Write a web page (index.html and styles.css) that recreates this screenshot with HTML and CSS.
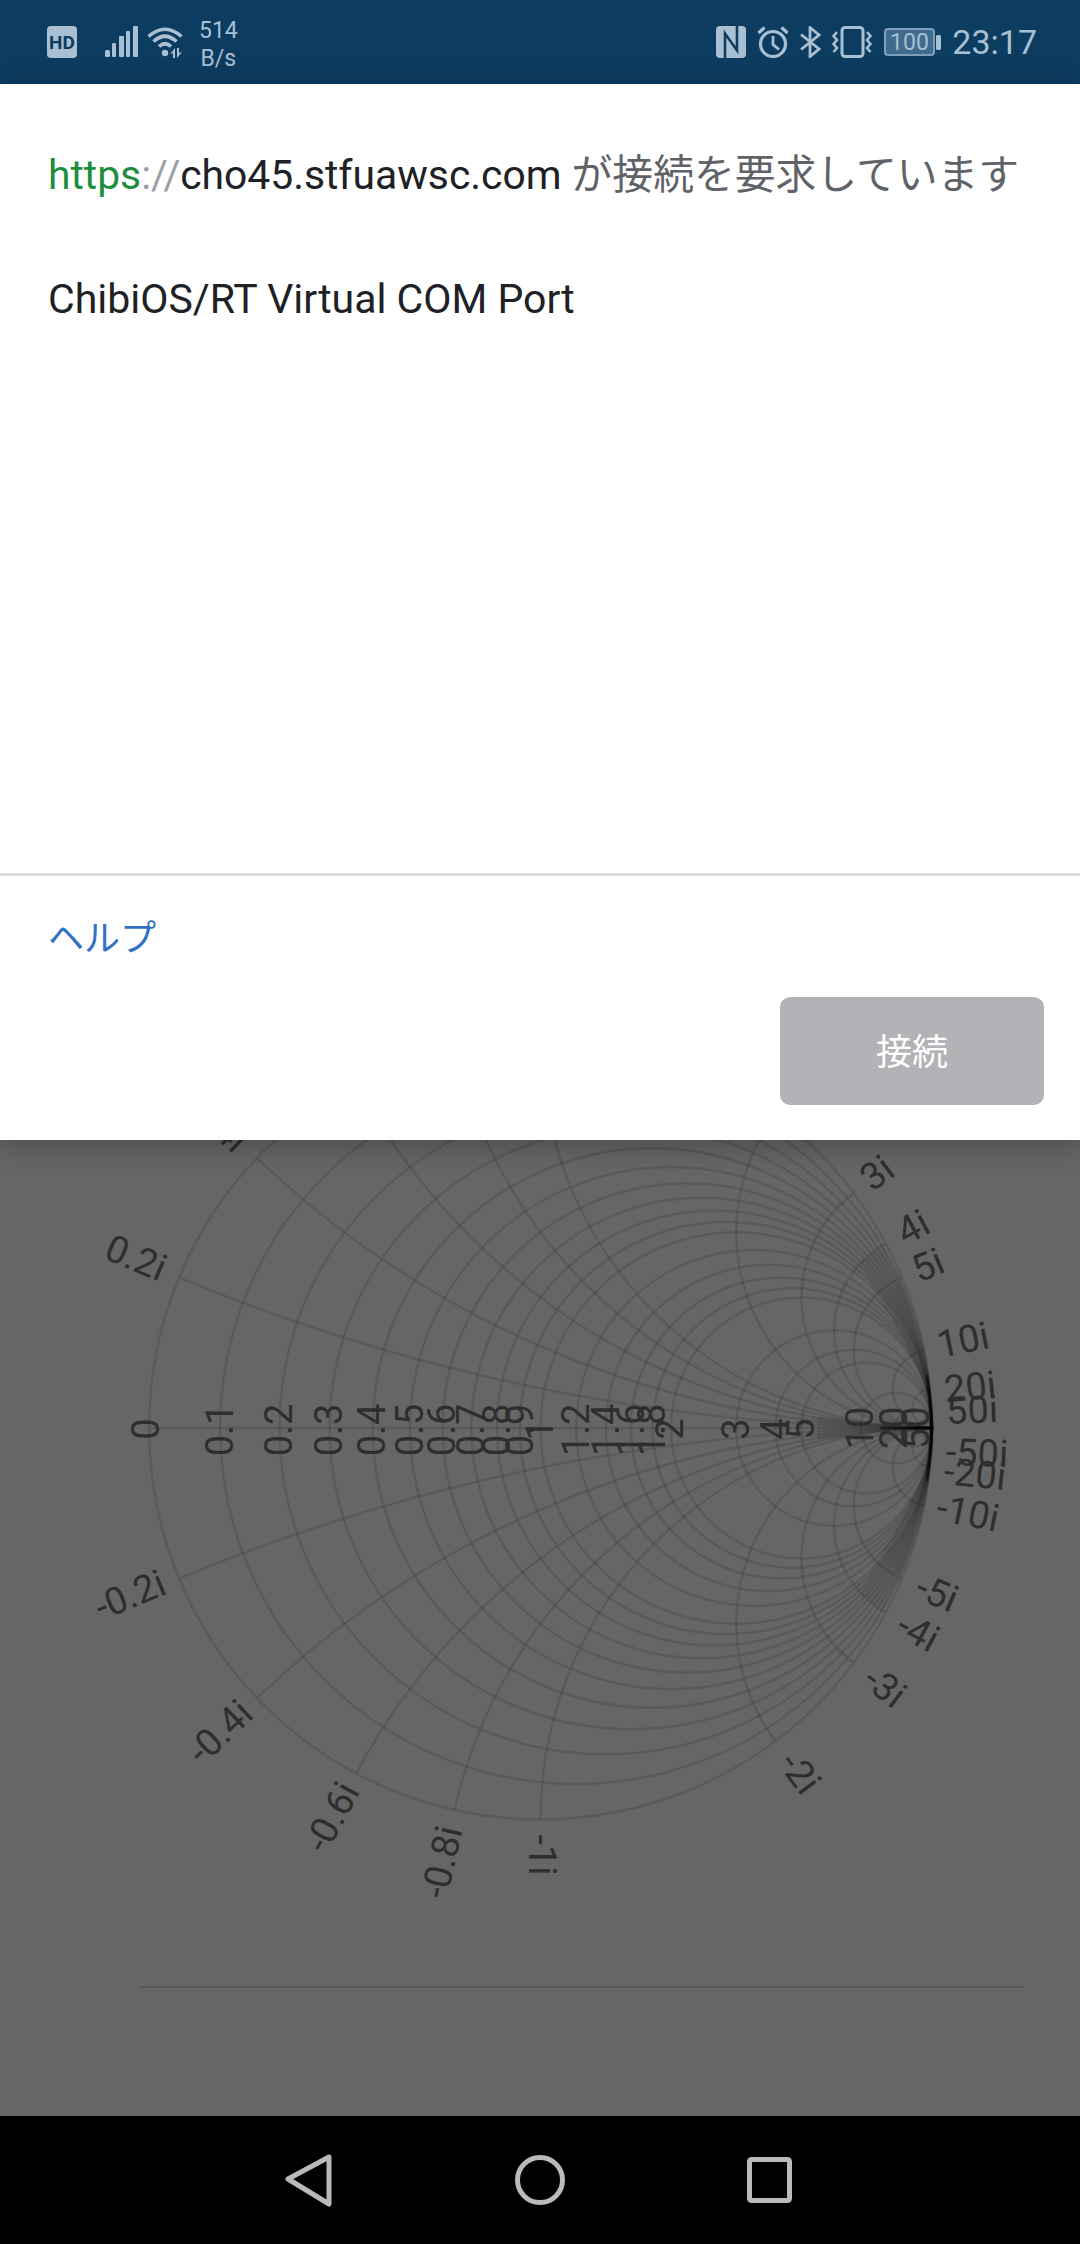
FILE: index.html
```html
<!DOCTYPE html>
<html lang="ja">
<head>
<meta charset="utf-8">
<title>Connect</title>
<link rel="stylesheet" href="styles.css">
</head>
<body>
<div class="screen">
  <header class="status">
    <div class="status-left">
      <svg class="ic" width="30" height="32" viewBox="0 0 30 32"><rect width="30" height="32" rx="4" fill="#a9bfd2"/><text x="15" y="22.5" class="hd">HD</text></svg>
      <svg class="ic sig" width="33" height="32" viewBox="0 0 33 32"><g fill="#a9bfd2"><rect x="0" y="24" width="5" height="7" rx="1.5"/><rect x="7" y="17" width="4" height="14" rx="1"/><rect x="14" y="10" width="5" height="21" rx="1"/><rect x="21" y="5" width="4" height="26" rx="1"/><rect x="28" y="0" width="5" height="31" rx="1"/></g></svg>
      <svg class="ic wifi" width="36" height="32" viewBox="0 0 36 32"><g fill="none" stroke="#a9bfd2" stroke-width="3.6"><path d="M1.5 10.5Q18-4 34.5 10.5"/><path d="M6.5 15.5Q18 5 29.5 15.500"/><path d="M12 20.500Q18 15 24 20.500"/></g><circle cx="18" cy="27" r="3.200" fill="#a9bfd2"/><path d="M28 22v10h-2v-5l-3 1zM30 22h2v5l3-1-5 6z" fill="#a9bfd2"/></svg>
      <div class="speed"><span>514</span><span>B/s</span></div>
    </div>
    <div class="status-right">
      <svg class="ic" width="30" height="32" viewBox="0 0 30 32"><rect width="30" height="32" rx="4" fill="#a9bfd2"/><path d="M9 32V7.500L21 24.500V0" fill="none" stroke="#0d3c61" stroke-width="2.600"/></svg>
      <svg class="ic" width="32" height="32" viewBox="0 0 32 32"><g fill="none" stroke="#a9bfd2"><circle cx="16" cy="18" r="12.500" stroke-width="3.200"/><path d="M16 10v8.500l6 5" stroke-width="2.800"/><path d="M1.500 7 7.500 1.500M30.500 7 24.500 1.500" stroke-width="3.200"/></g></svg>
      <svg class="ic" width="21" height="32" viewBox="0 0 21 32"><path d="M1 8.500 19 23l-9 7.500V1.500L19 9 1 23.500" fill="none" stroke="#a9bfd2" stroke-width="2.800"/></svg>
      <svg class="ic" width="40" height="32" viewBox="0 0 40 32"><rect x="10" y="1.500" width="21" height="29" rx="3" fill="none" stroke="#a9bfd2" stroke-width="3"/><path d="M5 6 1.500 10 5 14 1.500 18 5 22 1.500 26M35 6 38.500 10 35 14 38.500 18 35 22 38.500 26" fill="none" stroke="#a9bfd2" stroke-width="2.600"/></svg>
      <svg class="ic batt" width="57" height="28" viewBox="0 0 57 28"><rect x="1" y="1" width="49" height="26" rx="3" fill="#3f6b8f" stroke="#7f9fb9" stroke-width="2"/><rect x="52" y="7" width="5" height="15" rx="1.500" fill="#a9bfd2"/><text x="25.500" y="22" class="batt-num">100</text></svg>
      <span class="time">23:17</span>
    </div>
  </header>

  <section class="dialog">
    <div class="dialog-body">
      <p class="title"><span class="scheme">https</span><span class="sep">://</span><span class="host">cho45.stfuawsc.com</span> が接続を要求しています</p>
      <p class="device">ChibiOS/RT Virtual COM Port</p>
    </div>
    <div class="dialog-foot">
      <a class="help">ヘルプ</a>
      <div class="actions"><button class="connect">接続</button></div>
    </div>
  </section>

  <main class="stage">
    <svg class="chart" width="1080" height="976" viewBox="0 1140 1080 976">
      <g transform="translate(540.5 1428) scale(391.5)">
        <clipPath id="unit"><circle r="1"/></clipPath>
        <g class="grid">
          <circle r="1"/>
          <circle cx=".0909" r=".9091"/><circle cx=".1667" r=".8333"/><circle cx=".2308" r=".7692"/><circle cx=".2857" r=".7143"/><circle cx=".3333" r=".6667"/><circle cx=".375" r=".625"/><circle cx=".4118" r=".5882"/><circle cx=".4444" r=".5556"/><circle cx=".4737" r=".5263"/><circle cx=".5" r=".5"/><circle cx=".5455" r=".4545"/><circle cx=".5833" r=".4167"/><circle cx=".6154" r=".3846"/><circle cx=".6429" r=".3571"/><circle cx=".6667" r=".3333"/><circle cx=".75" r=".25"/><circle cx=".8" r=".2"/><circle cx=".8333" r=".1667"/><circle cx=".9091" r=".0909"/><circle cx=".9524" r=".0476"/><circle cx=".9804" r=".0196"/>
          <line x1="-1" y1="0" x2="1" y2="0"/>
        </g>
        <g class="grid" clip-path="url(#unit)">
          <circle cx="1" cy="-5" r="5"/><circle cx="1" cy="5" r="5"/>
          <circle cx="1" cy="-2.5" r="2.5"/><circle cx="1" cy="2.5" r="2.5"/>
          <circle cx="1" cy="-1.6667" r="1.6667"/><circle cx="1" cy="1.6667" r="1.6667"/>
          <circle cx="1" cy="-1.25" r="1.25"/><circle cx="1" cy="1.25" r="1.25"/>
          <circle cx="1" cy="-1" r="1"/><circle cx="1" cy="1" r="1"/>
          <circle cx="1" cy="-.5" r=".5"/><circle cx="1" cy=".5" r=".5"/>
          <circle cx="1" cy="-.3333" r=".3333"/><circle cx="1" cy=".3333" r=".3333"/>
          <circle cx="1" cy="-.25" r=".25"/><circle cx="1" cy=".25" r=".25"/>
          <circle cx="1" cy="-.2" r=".2"/><circle cx="1" cy=".2" r=".2"/>
          <circle cx="1" cy="-.1" r=".1"/><circle cx="1" cy=".1" r=".1"/>
          <circle cx="1" cy="-.05" r=".05"/><circle cx="1" cy=".05" r=".05"/>
          <circle cx="1" cy="-.02" r=".02"/><circle cx="1" cy=".02" r=".02"/>
        </g>
      </g>
      <path class="fan" d="M817 1417 930 1427V1429L817 1440Z"/>
      <path class="fan" d="M880 1300 900 1280Q917 1320 928 1393 915 1355 880 1300Z"/>
      <path class="fan" d="M880 1556 900 1576Q917 1536 928 1463 915 1501 880 1556Z"/>
      <path class="fan-soft" d="M860 1263 883 1247 900 1280 880 1300Z"/>
      <path class="fan-soft" d="M860 1593 883 1609 900 1576 880 1556Z"/>
      <path class="edge" d="M927 1375A391.5 391.500 0 0 1 927 1481"/>
      <line class="edge" x1="880" y1="1428" x2="932" y2="1428"/>
      <g class="labels">
        <text transform="translate(146 1429) rotate(-90)">0</text>
        <text transform="translate(220 1430) rotate(-90)">0.1</text>
        <text transform="translate(279 1430) rotate(-90)">0.2</text>
        <text transform="translate(329 1430) rotate(-90)">0.3</text>
        <text transform="translate(372 1430) rotate(-90)">0.4</text>
        <text transform="translate(410 1430) rotate(-90)">0.5</text>
        <text transform="translate(442 1430) rotate(-90)">0.6</text>
        <text transform="translate(471 1430) rotate(-90)">0.7</text>
        <text transform="translate(497 1430) rotate(-90)">0.8</text>
        <text transform="translate(520 1430) rotate(-90)">0.9</text>
        <text transform="translate(540 1430) rotate(-90)">1</text>
        <text transform="translate(576 1430) rotate(-90)">1.2</text>
        <text transform="translate(606 1430) rotate(-90)">1.4</text>
        <text transform="translate(631 1430) rotate(-90)">1.6</text>
        <text transform="translate(652 1430) rotate(-90)">1.8</text>
        <text transform="translate(670 1429) rotate(-90)">2</text>
        <text transform="translate(736 1429) rotate(-90)">3</text>
        <text transform="translate(775 1429) rotate(-90)">4</text>
        <text transform="translate(801 1429) rotate(-90)">5</text>
        <text transform="translate(860 1428) rotate(-90)">10</text>
        <text transform="translate(894 1428) rotate(-90)">20</text>
        <text transform="translate(916 1428) rotate(-90)">50</text>
        <text transform="translate(220 1124) rotate(43.6)">0.4i</text>
        <text transform="translate(136 1258) rotate(22.6)">0.2i</text>
        <text transform="translate(130 1595) rotate(-22.6)">-0.2i</text>
        <text transform="translate(220 1732) rotate(-43.6)">-0.4i</text>
        <text transform="translate(332 1817) rotate(-61.9)">-0.6i</text>
        <text transform="translate(442 1862) rotate(-77.3)">-0.8i</text>
        <text transform="translate(542 1855) rotate(90)">-1i</text>
        <text transform="translate(800 1773) rotate(53.1)">-2i</text>
        <text transform="translate(885 1687) rotate(36.9)">-3i</text>
        <text transform="translate(918 1632) rotate(28)">-4i</text>
        <text transform="translate(937 1593) rotate(22.6)">-5i</text>
        <text transform="translate(968 1513) rotate(11.4)">-10i</text>
        <text transform="translate(975 1474) rotate(5.7)">-20i</text>
        <text transform="translate(977 1453) rotate(2.3)">-50i</text>
        <text transform="translate(972 1410) rotate(-2.3)">50i</text>
        <text transform="translate(970 1387) rotate(-5.7)">20i</text>
        <text transform="translate(963 1340) rotate(-11.4)">10i</text>
        <text transform="translate(928 1265) rotate(-22.6)">5i</text>
        <text transform="translate(913 1227) rotate(-28)">4i</text>
        <text transform="translate(877 1173) rotate(-36.9)">3i</text>
      </g>
      <line class="rule" x1="140" y1="1987" x2="1024" y2="1987"/>
    </svg>
  </main>

  <nav class="navbar">
    <svg width="60" height="60" viewBox="0 0 60 60"><path d="M51 8 10 30 51 55z" transform="translate(0 -1)" fill="none" stroke="#bababa" stroke-width="5" stroke-linejoin="round"/></svg>
    <svg width="60" height="60" viewBox="0 0 60 60"><circle cx="30" cy="30" r="22.500" fill="none" stroke="#bababa" stroke-width="5"/></svg>
    <svg width="60" height="60" viewBox="0 0 60 60"><rect x="7.500" y="9.500" width="40" height="41" rx="2" fill="none" stroke="#bababa" stroke-width="5"/></svg>
  </nav>
</div>
</body>
</html>
```
FILE: styles.css
```css
* { box-sizing: border-box; }
html, body { margin: 0; padding: 0; }
body { font-family: Roboto, "Noto Sans CJK JP", sans-serif; }
.screen {
  width: 1080px;
  height: 2244px;
  display: flex;
  flex-direction: column;
  overflow: hidden;
  background: #666;
}

.status {
  height: 84px;
  flex: none;
  background: #0d3c61;
  color: #a9bfd2;
  display: flex;
  justify-content: space-between;
  align-items: center;
  padding: 0 43px 0 47px;
}
.status-left, .status-right { display: flex; align-items: center; }
.status-left { gap: 28px; }
.status-right { gap: 11px; }
.ic { display: block; flex: none; }
.sig { margin-right: -19px; }
.wifi { margin-right: -12px; }
.hd { font: 700 19px Roboto, sans-serif; fill: #0d3c61; text-anchor: middle; }
.batt { margin-left: 1px; }
.batt-num { font: 400 23px Roboto, sans-serif; fill: #a9bfd2; text-anchor: middle; }
.speed {
  display: flex;
  flex-direction: column;
  align-items: center;
  font-size: 23px;
  line-height: 28px;
  margin-top: 6px;
}
.time { font-size: 34px; line-height: 40px; }

.dialog {
  height: 1056px;
  flex: none;
  background: #fff;
  display: flex;
  flex-direction: column;
  position: relative;
  z-index: 1;
  box-shadow: 0 4px 28px rgba(0, 0, 0, .3);
}
.dialog-body { flex: 1; padding: 63px 48px 0; border-bottom: 3px solid #dcdcdc; }
.title { margin: 0; font-size: 40.800px; line-height: 56px; color: #5f6368; white-space: nowrap; }
.scheme { color: #1e8e3e; }
.sep { color: #9aa0a6; }
.host { color: #202124; }
.device { margin: 68px 0 0; font-size: 41px; line-height: 56px; color: #202124; }
.dialog-foot { flex: none; padding: 38px 36px 35px 48px; }
.help { display: block; font-size: 36px; line-height: 50px; color: #2f72c4; }
.actions { display: flex; justify-content: flex-end; margin-top: 33px; }
.connect {
  width: 264px;
  height: 108px;
  border: 0;
  border-radius: 10px;
  background: #b2b3b6;
  color: #fff;
  font: 400 36px "Noto Sans CJK JP", sans-serif;
  padding: 0 0 4px;
}

.stage { flex: 1; min-height: 0; overflow: hidden; }
.chart { display: block; }
.grid { fill: none; }
.grid circle, .grid line {
  stroke: rgba(0, 0, 0, .11);
  stroke-width: 2.5px;
  vector-effect: non-scaling-stroke;
}
.fan { fill: rgba(0, 0, 0, .09); }
.fan-soft { fill: rgba(0, 0, 0, .05); }
.edge { fill: none; stroke: rgba(0, 0, 0, .45); stroke-width: 3px; }
.labels text {
  font: 400 38px Roboto, sans-serif;
  fill: #2e2e2e;
  text-anchor: middle;
  dominant-baseline: central;
}
.rule { stroke: #595959; stroke-width: 2px; }

.navbar {
  height: 128px;
  flex: none;
  background: #000;
  display: flex;
  justify-content: center;
  align-items: center;
  gap: 172px;
}
```
